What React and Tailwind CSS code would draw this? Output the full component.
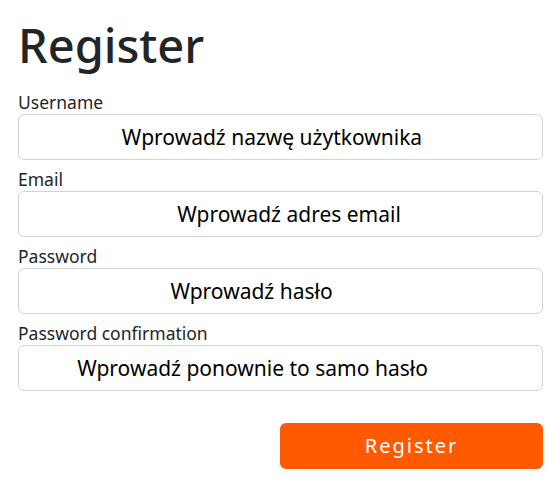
function Field({ label, placeholder, type = "text", pad }) {
  return (
    <div className="mb-[7px] flex flex-col">
      <label className="h-6 text-[17.5px] leading-6 text-[#212529]">{label}</label>
      <input
        type={type === "password" ? "text" : type}
        placeholder={placeholder}
        className={`h-[46px] w-full rounded-md border border-[#ced4da] bg-white text-center text-[21px] text-black placeholder:text-black focus:outline-none ${pad}`}
      />
    </div>
  );
}

export default function App() {
  return (
    <div
      className="min-h-screen bg-white pl-[18px] pr-[8px] pt-[15px]"
      style={{ fontFamily: '"Noto Sans", "Open Sans", sans-serif' }}
    >
      <h1 className="mb-[15px] text-[47px] font-medium leading-[60px] text-[#212529]">Register</h1>
      <form className="flex flex-col" onSubmit={(e) => e.preventDefault()}>
        <Field label="Username" placeholder="Wprowadź nazwę użytkownika" pad="pl-[3px] pr-[20px]" />
        <Field label="Email" placeholder="Wprowadź adres email" type="email" pad="pl-[20px] pr-[3px]" />
        <Field label="Password" placeholder="Wprowadź hasło" type="password" pad="pl-[3px] pr-[61px]" />
        <Field
          label="Password confirmation"
          placeholder="Wprowadź ponownie to samo hasło"
          type="password"
          pad="pl-[3px] pr-[59px]"
        />
        <div className="mt-[25px] flex justify-end">
          <button
            type="submit"
            className="h-[46px] w-[263px] rounded-md bg-[#ff5a00] text-[20px] tracking-[2px] text-white"
          >
            Register
          </button>
        </div>
      </form>
    </div>
  );
}
